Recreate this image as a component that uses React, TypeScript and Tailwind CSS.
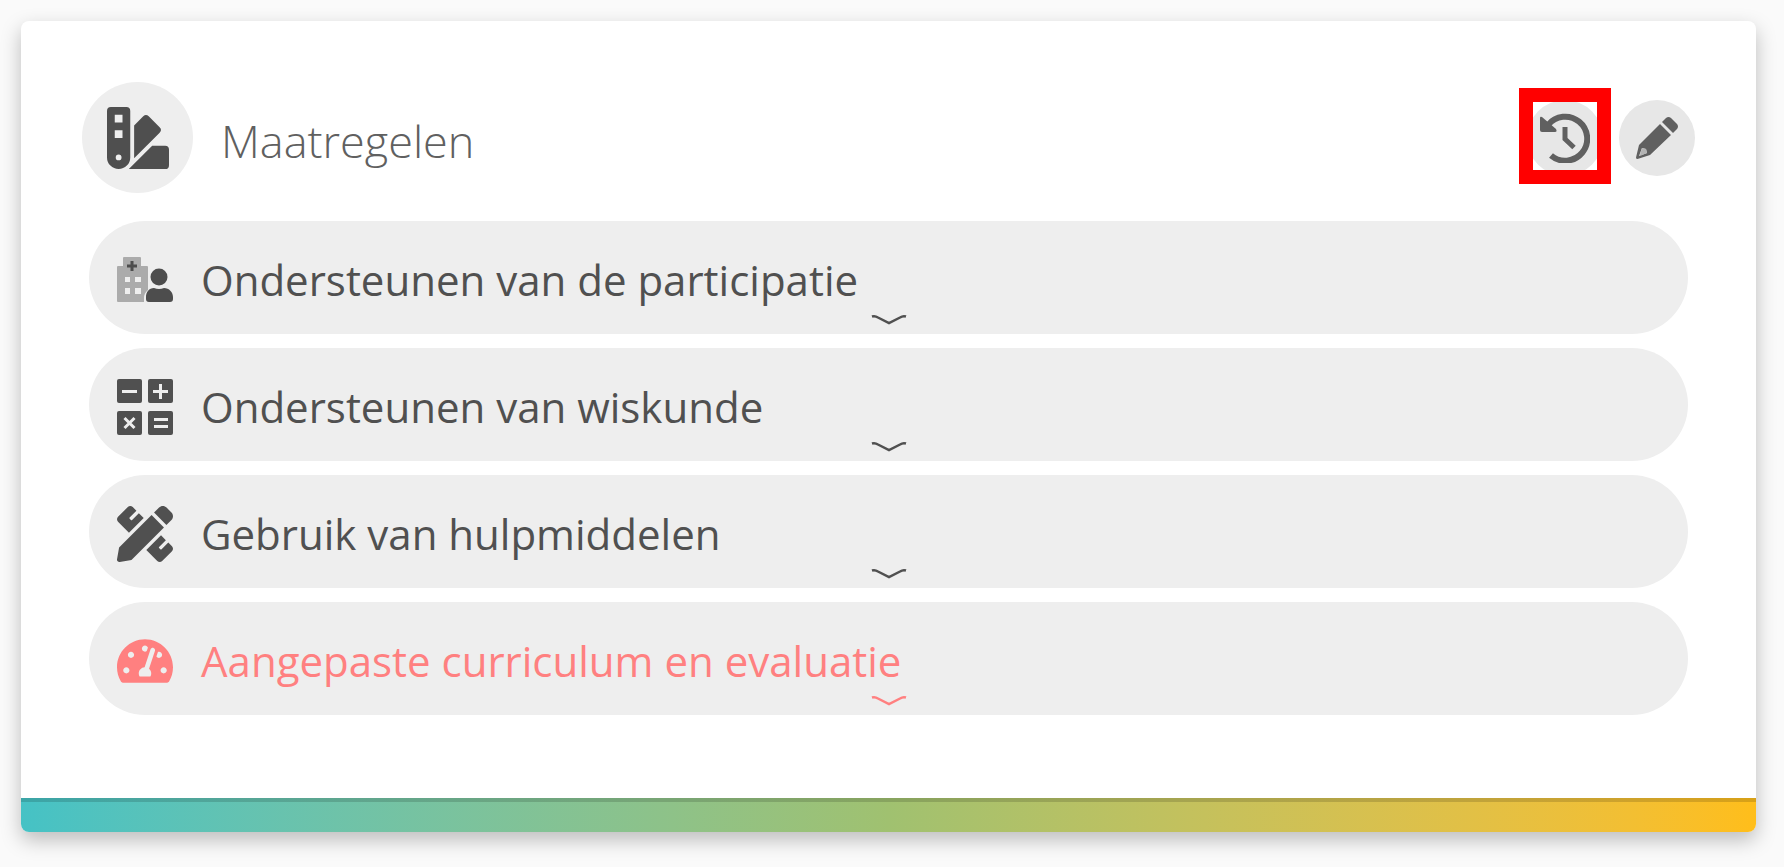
import type { ReactNode } from "react";
import { FaPencilRuler, FaSwatchbook, FaTachometerAlt } from "react-icons/fa";

function HospitalUserIcon() {
  return (
    <svg viewBox="0 0 56 45" className="w-14" aria-hidden="true">
      <path
        fill="#ababab"
        fillRule="evenodd"
        d="M8 0h15a1 1 0 0 1 1 1v8h6a1 1 0 0 1 1 1v23q-4 3-4 8v4H1a1 1 0 0 1-1-1V10a1 1 0 0 1 1-1h5V1a1 1 0 0 1 1-1ZM8 20v5h5v-5ZM18 20v5h6v-5ZM8 31v6h5v-6ZM18 31v6h6v-6Z"
      />
      <path fill="#4d4d4d" d="M13.500 4h3v3.500H20v3h-3.500V14h-3v-3.500H10v-3h3.500Z" />
      <circle cx="42" cy="20" r="8.500" fill="#4d4d4d" />
      <path fill="#4d4d4d" d="M37 31q5 2 10 0c5 0 9 4 9 9v2q0 3-3 3H32q-3 0-3-3v-2c0-5 3-9 8-9Z" />
    </svg>
  );
}

function OperatorsIcon() {
  return (
    <svg viewBox="0 0 56 56" className="w-14" aria-hidden="true">
      <g fill="currentColor">
        <rect x="0" y="0" width="25" height="24" rx="2" />
        <rect x="31" y="0" width="25" height="24" rx="2" />
        <rect x="0" y="32" width="25" height="24" rx="2" />
        <rect x="31" y="32" width="25" height="24" rx="2" />
      </g>
      <g stroke="#eeeeee" strokeWidth="3" fill="none">
        <path d="M5 12.500h15M36 12.500h15M43.500 5v15" />
        <path d="m7.500 39 10 10M17.500 39l-10 10M37 40.500h14M37 47.500h14" />
      </g>
    </svg>
  );
}

function HistoryIcon() {
  return (
    <svg viewBox="0 0 50 50" className="w-[50px]" aria-hidden="true">
      <path d="M8 12a22 22 0 1 1 3 30.500" fill="none" stroke="currentColor" strokeWidth="6" />
      <path d="M0 5q0-2 2-1l14 12q1.500 3-1 3H2q-2 0-2-2Z" fill="currentColor" />
      <path d="M25 14v12l9 8.500" fill="none" stroke="currentColor" strokeWidth="5" />
    </svg>
  );
}

function PencilIcon() {
  return (
    <svg viewBox="0 0 42 42" className="w-[42px]" aria-hidden="true">
      <g fill="currentColor">
        <path d="m26 5 4-4q2.500-2 5 0l6 6q2 2.500 0 5l-4 4Z" />
        <path
          fillRule="evenodd"
          d="M24 7 35 18 14 38 1.500 42Q0 42 0 40.500L3 28ZM6 31 3 39 11 36 10 32Z"
        />
      </g>
      <path d="m6 31 4 1 1 4-6 2.500-1-1Z" fill="#b4b4b4" />
    </svg>
  );
}

function Chevron() {
  return (
    <svg viewBox="0 0 36 12" className="w-9" aria-hidden="true">
      <path
        d="M1 2.500q3-1 6 1L18 9l11-5.500q3-2 6-1"
        fill="none"
        stroke="currentColor"
        strokeWidth="2.500"
      />
    </svg>
  );
}

type Measure = { label: string; icon: ReactNode; alert?: boolean };

const measures: Measure[] = [
  { label: "Ondersteunen van de participatie", icon: <HospitalUserIcon /> },
  { label: "Ondersteunen van wiskunde", icon: <OperatorsIcon /> },
  { label: "Gebruik van hulpmiddelen", icon: <FaPencilRuler className="size-14" /> },
  {
    label: "Aangepaste curriculum en evaluatie",
    icon: <FaTachometerAlt className="size-14" />,
    alert: true,
  },
];

function MeasureRow({ label, icon, alert }: Measure) {
  return (
    <li>
      <button
        type="button"
        aria-expanded="false"
        className={`relative flex h-[113px] w-full items-center gap-7 rounded-full bg-[#eeeeee] px-7 pt-1 text-left ${
          alert ? "text-[#ff8080]" : "text-[#505050]"
        }`}
      >
        <span className="flex w-14 shrink-0 justify-center">{icon}</span>
        <span className="text-[42px] leading-[60px]">{label}</span>
        <span className="absolute inset-x-0 bottom-2 flex justify-center">
          <Chevron />
        </span>
      </button>
    </li>
  );
}

export default function App() {
  return (
    <main className="min-h-screen bg-[#fafafa] px-[21px] py-[21px] pr-7 font-['Open_Sans','Noto_Sans',sans-serif]">
      <section className="overflow-hidden rounded-lg bg-white shadow-[0_8px_20px_rgba(0,0,0,0.25)]">
        <header className="flex items-center px-[61px] pt-[61px]">
          <span className="flex size-[111px] items-center justify-center rounded-full bg-[#eeeeee] text-[#4f4f4f]">
            <FaSwatchbook className="size-[62px]" />
          </span>
          <h1 className="ml-7 pt-1.5 text-[45px] leading-[60px] font-light text-[#606060]">Maatregelen</h1>
          <div className="ml-auto flex gap-4">
            <div className="relative">
              <button
                type="button"
                aria-label="Geschiedenis"
                className="flex size-[76px] items-center justify-center rounded-full bg-[#e7e7e7] text-[#606060]"
              >
                <HistoryIcon />
              </button>
              <span className="pointer-events-none absolute -inset-x-2 -top-3 -bottom-2 border-[14px] border-[#ff0000]" />
            </div>
            <button
              type="button"
              aria-label="Bewerken"
              className="flex size-[76px] items-center justify-center rounded-full bg-[#e7e7e7] text-[#606060]"
            >
              <PencilIcon />
            </button>
          </div>
        </header>
        <ul className="flex flex-col gap-3.5 px-[68px] pt-7 pb-[83px]">
          {measures.map((measure) => (
            <MeasureRow key={measure.label} {...measure} />
          ))}
        </ul>
        <div className="h-[34px] border-t-4 border-black/15 bg-linear-to-r from-[#45c2c5] via-[#a0c170] to-[#ffbe1a] bg-origin-border" />
      </section>
    </main>
  );
}
